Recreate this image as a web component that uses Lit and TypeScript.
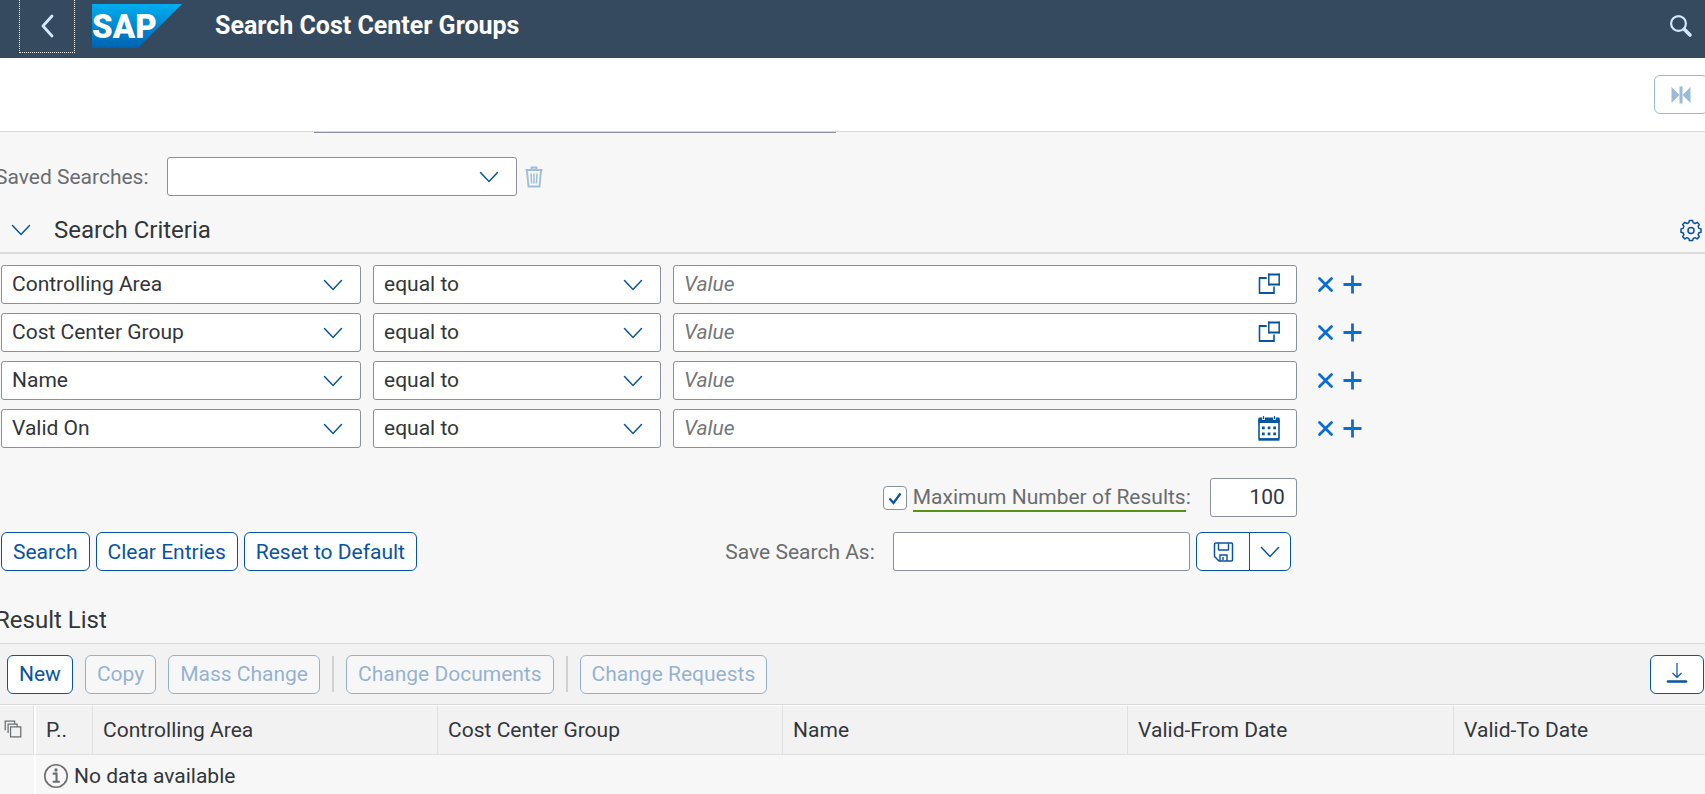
import { LitElement, html, css, svg, nothing } from "lit";
import { customElement, property } from "lit/decorators.js";

const icons: Record<string, unknown> = {
  back: svg`<path d="M16 1 7 11l9 10" fill="none" stroke="currentColor" stroke-width="2.800" stroke-linecap="round" stroke-linejoin="round"/>`,
  search: svg`<circle cx="8.500" cy="8.500" r="7.400" fill="none" stroke="currentColor" stroke-width="2.200"/><path d="m14.500 14.500 5.500 5.500" stroke="currentColor" stroke-width="3.600" stroke-linecap="round"/>`,
  chevron: svg`<path d="m2.500 6.500 8.500 9 8.500-9" fill="none" stroke="currentColor" stroke-width="1.500" stroke-linecap="round"/>`,
  collapse: svg`<path d="M1.500 3v16l8-8zM20.500 3v16l-8-8z" fill="currentColor"/><path d="M11 2.500v17" stroke="currentColor" stroke-width="3"/>`,
  trash: svg`<path d="M2.500 4h17M8.500 3.500V1.500h5v2M4 5l1.500 15.500h11L18 5" fill="none" stroke="currentColor" stroke-width="1.900"/><path d="m8 7.500.6 10M11 7.500v10M14 7.500l-.6 10" stroke="currentColor" stroke-width="1.500"/>`,
  gear: svg`<path d="M9.400 1.500h3.200l.6 2.200q1 .3 1.900.8l2-1.200 2.200 2.200-1.200 2q.5.900.8 1.900l2.100.6v3.200l-2.100.6q-.3 1-.8 1.900l1.200 2-2.200 2.200-2-1.200q-.9.500-1.900.8l-.6 2.100H9.400l-.6-2.100q-1-.3-1.900-.8l-2 1.200-2.200-2.200 1.200-2q-.5-.9-.8-1.900L1 13.200V10l2.100-.6q.3-1 .8-1.900l-1.200-2 2.200-2.200 2 1.200q.9-.5 1.900-.8z" fill="none" stroke="currentColor" stroke-width="1.500" stroke-linejoin="round"/><circle cx="11" cy="11.500" r="3" fill="none" stroke="currentColor" stroke-width="1.500"/>`,
  valuehelp: svg`<path d="M8.500 4H1.500v15h14.500V12.500" fill="none" stroke="currentColor" stroke-width="1.600"/><path d="M1 19h15.500M1 4h7.500M10.500.500h11M10.500 10.500h11" stroke="currentColor" stroke-width="2.200"/><path d="M10.800-.5v12M21.200-.5v12" stroke="currentColor" stroke-width="1.500"/>`,
  calendar: svg`<rect x="1" y="1" width="20" height="20" rx="1" fill="none" stroke="currentColor" stroke-width="1.600"/><path d="M.500-.5h21v5.500H.500z" fill="currentColor"/><path d="M.500 21.500h21" stroke="currentColor" stroke-width="2.400"/><path d="M5.500-2v4M16.500-2v4" stroke="#fff" stroke-width="2.600"/><path d="M5.500-2v3M16.500-2v3" stroke="currentColor" stroke-width="1.200"/><path d="M4 8.500h2.700v2.700H4zM9.700 8.500h2.700v2.700H9.700zM15.300 8.500H18v2.700h-2.700zM4 14.500h2.700v2.700H4zM9.700 14.500h2.700v2.700H9.700zM15.300 14.500H18v2.700h-2.700z" fill="currentColor"/>`,
  remove: svg`<path d="m5.500 4.500 12 12M17.500 4.500l-12 12" stroke="currentColor" stroke-width="2.800" stroke-linecap="round"/>`,
  add: svg`<path d="M11.500 1.500v18M2.500 10.500h18" stroke="currentColor" stroke-width="2.800"/>`,
  save: svg`<path d="M4 2h15.500q1 0 1 1v16q0 1-1 1H7L2.500 15.500V4q0-2 1.500-2z" fill="none" stroke="currentColor" stroke-width="1.500"/><path d="M6.500 2.500v6q0 .5.500.5h9q.5 0 .5-.5v-6M8 20v-6h7v6M11 16v3" fill="none" stroke="currentColor" stroke-width="1.400"/>`,
  download: svg`<path d="M11 0v14.500M6.500 10 11 14.500l4.500-4.500" fill="none" stroke="currentColor" stroke-width="1.200"/><path d="M2 18.500h18" stroke="currentColor" stroke-width="2.600" stroke-linecap="round"/>`,
  copies: svg`<path d="M8 8.500h12.500v12H8z M5 16V5H16V8M1.500 12.500V1.500H13V5" fill="none" stroke="currentColor" stroke-width="1.500"/>`,
  info: svg`<circle cx="11" cy="11" r="10.300" fill="none" stroke="currentColor" stroke-width="1.500"/><path d="M8 8.800h3.500v7.200M8 16.200h6.500" fill="none" stroke="currentColor" stroke-width="1.900"/><circle cx="11" cy="5.500" r="1.500" fill="currentColor"/>`,
};

@customElement("ui-icon")
export class UiIcon extends LitElement {
  @property() name = "";
  static styles = css`
    :host { display: inline-flex; width: 22px; height: 22px; flex: none; }
    svg { width: 100%; height: 100%; overflow: visible; }
  `;
  render() {
    return html`<svg viewBox="0 0 22 22" aria-hidden="true">${icons[this.name]}</svg>`;
  }
}

const criteria = [
  { field: "Controlling Area", help: "valuehelp" },
  { field: "Cost Center Group", help: "valuehelp" },
  { field: "Name", help: "" },
  { field: "Valid On", help: "calendar" },
];

const columns = ["P..", "Controlling Area", "Cost Center Group", "Name", "Valid-From Date", "Valid-To Date"];

@customElement("app-root")
export class AppRoot extends LitElement {
  static styles = css`
    :host {
      display: block;
      min-height: 100vh;
      overflow: hidden;
      background: #f7f7f7;
      color: #32363a;
      font: 21px/26px Roboto, "Noto Sans", sans-serif;
    }
    * { box-sizing: border-box; }
    button, input, select { font: inherit; color: inherit; margin: 0; }
    h1, h2 { margin: 0; }

    .shell {
      display: flex;
      align-items: flex-start;
      height: 58px;
      padding: 0 13px 0 19px;
      background: #354a5f;
      color: #d1e8ff;
    }
    .back {
      display: grid;
      place-items: center;
      width: 56px;
      height: 53px;
      border: 1px dotted #fff;
      border-top: 0;
      background: none;
      padding: 0;
      color: #d1e8ff;
    }
    .logo { width: 90px; height: 44px; margin: 4px 0 0 17px; }
    .logo text { font: 900 33px Roboto, sans-serif; fill: #fff; }
    .shell h1 { flex: 1; margin-left: 33px; font-size: 25px; line-height: 52px; font-weight: 700; color: #fff; }
    .shell-search { display: grid; place-items: center; height: 52px; padding: 0; border: 0; background: none; color: #d1e8ff; }

    .pagebar {
      display: flex;
      justify-content: flex-end;
      align-items: center;
      height: 74px;
      background: #fff;
      border-bottom: 1px solid #d9d9d9;
    }
    .scrolled-field { width: 522px; height: 1px; margin-left: 314px; background: #89919a; }

    .btn {
      display: inline-flex;
      align-items: center;
      justify-content: center;
      height: 39px;
      padding: 0 11px;
      border: 1px solid #0854a0;
      border-radius: 6px;
      background: #fff;
      color: #0854a0;
      white-space: nowrap;
    }
    .btn:disabled { opacity: 0.4; }
    .icon-btn { width: 54px; padding: 0; }
    .pagebar .btn { margin-right: -3px; }

    .box {
      width: 100%;
      height: 39px;
      padding: 0 11px 1px 10px;
      border: 1px solid #89919a;
      border-radius: 3px;
      background: #fff;
      appearance: none;
      grid-area: 1 / 1;
    }
    .box::placeholder { color: #74777a; font-style: italic; opacity: 1; }
    .field { display: grid; align-items: center; min-width: 0; color: #32363a; }
    .field ui-icon { grid-area: 1 / 1; justify-self: end; margin-right: 17px; color: #0854a0; pointer-events: none; }
    .label { color: #6a6d70; white-space: nowrap; }

    .saved { display: flex; align-items: center; margin: 24px 0 0 -5px; }
    .saved .label { width: 172px; }
    .saved .field { width: 350px; }
    .bare { display: inline-flex; padding: 0; border: 0; background: none; color: #0a6ed1; }
    .saved .bare { margin-left: 6px; color: #0854a0; }
    .bare:disabled { opacity: 0.35; }

    .section { display: flex; align-items: center; height: 58px; padding: 12px 3px 0 10px; border-bottom: 2px solid #dcdcdc; }
    .section .bare { color: #0854a0; }
    .section h2, .results h2 { font-size: 24px; line-height: 30px; font-weight: 400; }
    .section h2 { flex: 1; margin-left: 22px; }

    .rows { display: grid; gap: 9px; margin-top: 11px; padding-left: 1px; }
    .row { display: flex; align-items: center; }
    .criterion { display: grid; grid-template-columns: 360fr 288fr 624fr; gap: 12px; width: calc(76% + 1px); }
    .actions { display: flex; gap: 5px; margin-left: 17px; }

    .wide { display: flex; width: calc(76% + 1px); padding-left: 1px; align-items: center; }
    .limit { justify-content: flex-end; margin-top: 30px; }
    .limit .label { margin: 0 19px 0 6px; display: flex; }
    .limit .label span { border-bottom: 2px solid #5a9216; }
    .check { display: grid; width: 24px; height: 24px; color: #0854a0; }
    .check input { grid-area: 1 / 1; appearance: none; width: 24px; height: 24px; border: 1px solid #89919a; border-radius: 4px; background: #fff; }
    .check svg { grid-area: 1 / 1; width: 24px; height: 24px; pointer-events: none; }
    .limit .box { width: 87px; text-align: right; }

    .commands { gap: 6px; margin-top: 15px; padding-right: 6px; }
    .spacer { flex: 1; }
    .commands .label { margin-right: 12px; }
    .commands .box { width: 297px; }
    .split { display: flex; }
    .split .btn:first-child { width: 54px; padding: 0; border-radius: 6px 0 0 6px; }
    .split .btn:last-child { width: 42px; margin-left: -1px; padding: 0; border-radius: 0 6px 6px 0; }

    .results { margin-top: 34px; }
    .results h2 { margin: 0 0 8px -5px; }
    .toolbar {
      display: flex;
      align-items: center;
      gap: 12px;
      height: 62px;
      padding: 0 1px 0 7px;
      background: #f2f2f2;
      border-top: 1px solid #d9d9d9;
      border-bottom: 1px solid #d9d9d9;
    }
    .toolbar .btn { flex: none; }
    .divider { width: 2px; height: 36px; background: #d0d0d0; }
    table { width: 100%; table-layout: fixed; border-collapse: separate; border-spacing: 0; }
    .c-sel { width: 2%; }
    .c-p { width: 59px; }
    .c-main { width: 345px; }
    .c-date { width: 326px; }
    th {
      height: 50px;
      padding: 0 0 0 10px;
      background: #f2f2f2;
      border-top: 1px solid #fff;
      border-right: 1px solid #e0e0e0;
      border-bottom: 1px solid #e0e0e0;
      text-align: left;
      font-weight: 400;
      white-space: nowrap;
    }
    th:first-child { padding: 0 0 3px 4px; color: #6a6d70; }
    th:first-child ui-icon { display: flex; width: 18px; height: 18px; }
    th:nth-child(2), td:nth-child(2) { border-left: 2px solid #fff; }
    th:last-child { border-right: 0; }
    td { height: 42px; padding: 0; }
    .empty { display: flex; align-items: center; gap: 6px; padding-left: 8px; }
    .empty ui-icon { width: 24px; height: 24px; color: #6a6d70; }
  `;

  private select(label: string, value: string, id?: string) {
    return html`<div class="field">
      <select class="box" aria-label=${label} id=${id ?? nothing}><option>${value}</option></select>
      <ui-icon name="chevron"></ui-icon>
    </div>`;
  }

  private iconButton(label: string, icon: string, cls = "bare", disabled = false) {
    return html`<button class=${cls} aria-label=${label} ?disabled=${disabled}><ui-icon name=${icon}></ui-icon></button>`;
  }

  render() {
    return html`
      <header class="shell">
        ${this.iconButton("Back", "back", "back")}
        <svg class="logo" viewBox="0 0 90 44" role="img" aria-label="SAP">
          <defs><linearGradient id="g" x2="0" y2="1"><stop stop-color="#00aeef"/><stop offset="1" stop-color="#0062b1"/></linearGradient></defs>
          <path d="M0 0h90L46 44H0z" fill="url(#g)"/>
          <text x="0" y="34">SAP</text>
        </svg>
        <h1>Search Cost Center Groups</h1>
        ${this.iconButton("Search", "search", "shell-search")}
      </header>
      <div class="pagebar">${this.iconButton("Collapse", "collapse", "btn icon-btn", true)}</div>
      <div class="scrolled-field"></div>

      <div class="saved">
        <label class="label" for="saved">Saved Searches:</label>
        ${this.select("Saved Searches", "", "saved")}
        ${this.iconButton("Delete", "trash", "bare", true)}
      </div>

      <div class="section">
        ${this.iconButton("Collapse Search Criteria", "chevron")}
        <h2>Search Criteria</h2>
        ${this.iconButton("Settings", "gear")}
      </div>

      <div class="rows">
        ${criteria.map(
          (c) => html`<div class="row">
            <div class="criterion">
              ${this.select("Field", c.field)} ${this.select("Operator", "equal to")}
              <div class="field">
                <input class="box" placeholder="Value" aria-label=${c.field} />
                ${c.help ? html`<ui-icon name=${c.help}></ui-icon>` : nothing}
              </div>
            </div>
            <div class="actions">${this.iconButton("Remove", "remove")} ${this.iconButton("Add", "add")}</div>
          </div>`
        )}
      </div>

      <div class="wide limit">
        <div class="check">
          <input type="checkbox" checked id="limit" />
          <svg viewBox="0 0 24 24" aria-hidden="true"><path d="m6.500 12.500 4 4.500 7-9.500" fill="none" stroke="currentColor" stroke-width="2.200"/></svg>
        </div>
        <label class="label" for="limit"><span>Maximum Number of Results</span>:</label>
        <input class="box" value="100" aria-label="Maximum Number of Results" />
      </div>

      <div class="wide commands">
        <button class="btn">Search</button>
        <button class="btn">Clear Entries</button>
        <button class="btn">Reset to Default</button>
        <span class="spacer"></span>
        <label class="label" for="save-as">Save Search As:</label>
        <input class="box" id="save-as" />
        <div class="split">
          ${this.iconButton("Save", "save", "btn")}${this.iconButton("More", "chevron", "btn")}
        </div>
      </div>

      <section class="results">
        <h2>Result List</h2>
        <div class="toolbar">
          <button class="btn">New</button>
          <button class="btn" disabled>Copy</button>
          <button class="btn" disabled>Mass Change</button>
          <span class="divider"></span>
          <button class="btn" disabled>Change Documents</button>
          <span class="divider"></span>
          <button class="btn" disabled>Change Requests</button>
          <span class="spacer"></span>
          ${this.iconButton("Export", "download", "btn icon-btn")}
        </div>
        <table>
          <colgroup>
            <col class="c-sel" /><col class="c-p" /><col class="c-main" /><col class="c-main" /><col class="c-main" /><col class="c-date" /><col />
          </colgroup>
          <thead>
            <tr>
              <th aria-label="Select all"><ui-icon name="copies"></ui-icon></th>
              ${columns.map((c) => html`<th scope="col">${c}</th>`)}
            </tr>
          </thead>
          <tbody>
            <tr>
              <td></td>
              <td colspan="6"><div class="empty"><ui-icon name="info"></ui-icon>No data available</div></td>
            </tr>
          </tbody>
        </table>
      </section>
    `;
  }
}
